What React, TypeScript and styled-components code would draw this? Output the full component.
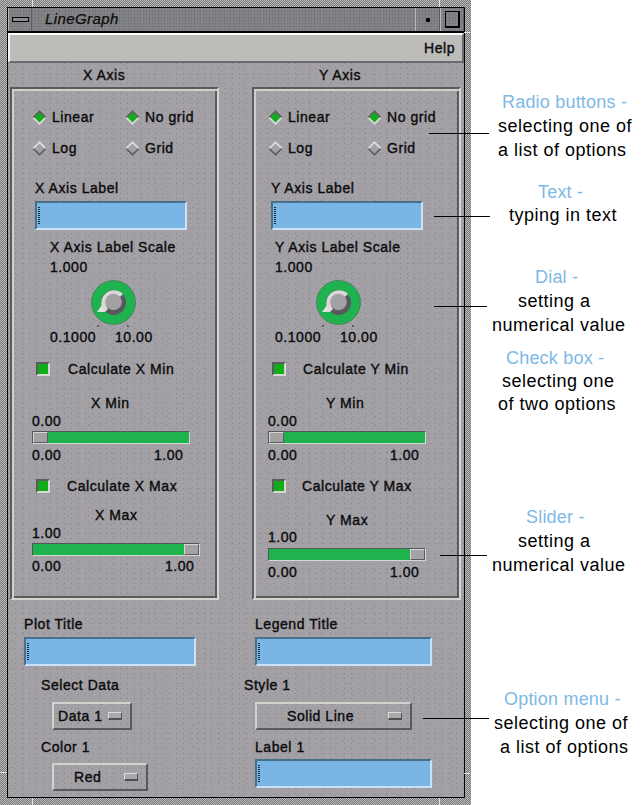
import React from "react";
import styled, { createGlobalStyle, css } from "styled-components";

const Global = createGlobalStyle`
  html, body { margin: 0; padding: 0; background: #fff; }
  body { font-family: "Liberation Sans", Arial, sans-serif; }
`;

const speckle = css`
  background-color: #a3a1a6;
  background-image:
    radial-gradient(circle at 0.5px 0.5px, #86858a 0.5px, transparent 0.6px),
    radial-gradient(circle at 0.5px 0.5px, #8b8a8f 0.5px, transparent 0.6px),
    radial-gradient(circle at 0.5px 0.5px, #8e8d92 0.5px, transparent 0.6px);
  background-size: 7px 5px, 11px 9px, 13px 7px;
  background-position: 0 0, 4px 2px, 2px 4px;
`;

const Page = styled.div`
  position: relative;
  width: 642px;
  height: 805px;
  overflow: hidden;
  display: flex;
  background: #fff;
`;

const Frame = styled.div`
  position: relative;
  box-sizing: border-box;
  width: 471px;
  height: 805px;
  padding: 7px 6px 7px 7px;
  background: repeating-conic-gradient(#747474 0 25%, #bdbdbd 0 50%) 0 0 / 2px 2px;
`;

const FrameTick = styled.i<{ $x: number; $y: number; $w: number; $h: number }>`
  position: absolute;
  left: ${(p) => p.$x}px;
  top: ${(p) => p.$y}px;
  width: ${(p) => p.$w}px;
  height: ${(p) => p.$h}px;
  background: #e4e4e0;
`;

const Window = styled.div`
  box-sizing: border-box;
  height: 791px;
  border: 1px solid #000;
  display: flex;
  flex-direction: column;
`;

const TitleBar = styled.div`
  height: 23px;
  display: flex;
  align-items: stretch;
  background-color: #838286;
  background-image:
    radial-gradient(circle at 0.5px 0.5px, #6d6c70 0.5px, transparent 0.6px),
    radial-gradient(circle at 0.5px 0.5px, #717074 0.5px, transparent 0.6px);
  background-size: 3px 3px, 5px 4px;
  background-position: 0 0, 1px 2px;
  border-bottom: 2px solid #000;
  flex: none;
`;

const TitleButton = styled.div<{ $w: number }>`
  width: ${(p) => p.$w}px;
  flex: none;
  display: flex;
  align-items: center;
  justify-content: center;
  box-sizing: border-box;
  border-left: 1px solid #b8b8b4;
  border-right: 1px solid #5e5d60;
`;

const MenuGlyph = styled.span`
  width: 15px;
  height: 3px;
  background: #8f8e90;
  border: 1px solid #000;
`;
const DotGlyph = styled.span`
  width: 4px;
  height: 4px;
  background: #000;
  border-radius: 1px;
`;
const MaxGlyph = styled.span`
  box-sizing: border-box;
  width: 15px;
  height: 17px;
  border: 1px solid #000;
  border-right-width: 2px;
  border-bottom-width: 2px;
`;

const Title = styled.div`
  flex: 1;
  padding-left: 13px;
  font-style: italic;
  font-size: 15px;
  line-height: 22px;
  letter-spacing: 0.4px;
  color: #0c0c0c;
  -webkit-text-stroke: 0.25px #0c0c0c;
`;

const MenuBar = styled.div`
  box-sizing: border-box;
  height: 30px;
  flex: none;
  background: #bcbdb9;
  border-top: 2px solid #fff;
  border-left: 2px solid #f2f2f0;
  border-bottom: 2px solid #6c6b6e;
  border-right: 2px solid #6c6b6e;
  display: flex;
  align-items: center;
  justify-content: flex-end;
  padding-right: 7px;
`;

const Body = styled.div`
  ${speckle}
  flex: 1;
  min-height: 0;
`;

const Text = styled.span`
  font-size: 14px;
  letter-spacing: 0.55px;
  color: #0c0c0c;
  -webkit-text-stroke: 0.4px #0c0c0c;
  white-space: nowrap;
`;

const AxisGrid = styled.div`
  display: grid;
  grid-template-columns: 209px 209px;
  column-gap: 33px;
  padding-left: 2px;
`;

const Heading = styled.div<{ $x: number }>`
  height: 24px;
  padding-left: ${(p) => p.$x}px;
  display: flex;
  align-items: center;
`;

const Panel = styled.div`
  box-sizing: border-box;
  height: 513px;
  border: 2px solid;
  border-color: #5b5a5e #d5d6d0 #d5d6d0 #5b5a5e;
  box-shadow: inset 2px 2px 0 #cfd0ca, inset -2px -2px 0 #5b5a5e;
  display: flex;
  flex-direction: column;
`;

const Row = styled.div<{ $x?: number; $mt?: number; $h?: number }>`
  flex: none;
  height: ${(p) => p.$h ?? 18}px;
  margin-top: ${(p) => p.$mt ?? 0}px;
  margin-left: ${(p) => p.$x ?? 0}px;
  display: flex;
  align-items: center;
`;

const RadioGrid = styled.div<{ $x: number; $col: number }>`
  margin: 16px 0 0 ${(p) => p.$x}px;
  display: grid;
  grid-template-columns: ${(p) => p.$col}px 80px;
  grid-auto-rows: 24px;
  row-gap: 7px;
`;

const RadioItem = styled.label`
  display: flex;
  align-items: center;
  gap: 5px;
`;

const RadioSvg = styled.svg`
  width: 15px;
  height: 15px;
  flex: none;
`;

const Radio = ({ on, label }: { on: boolean; label: string }) => (
  <RadioItem>
    <RadioSvg viewBox="0 0 15 15">
      <polygon points="7.5,0 15,7.5 7.5,15 0,7.5" fill="#dcdcd8" />
      {on ? (
        <polygon points="7.5,0 15,7.5 12,7.5 7.5,3 3,7.5 0,7.5" fill="#5c5b5f" />
      ) : (
        <polygon points="15,7.5 7.5,15 0,7.5 3,7.5 7.5,12 12,7.5" fill="#5c5b5f" />
      )}
      <polygon points="7.5,2.5 12.5,7.5 7.5,12.5 2.5,7.5" fill={on ? "#12ad1c" : "#a3a1a6"} />
    </RadioSvg>
    <Text>{label}</Text>
  </RadioItem>
);

const FieldBox = styled.div<{ $w: number }>`
  position: relative;
  box-sizing: border-box;
  width: ${(p) => p.$w}px;
  height: 29px;
  background: #79b6e5;
  border: 2px solid;
  border-color: #48708a #c9e2f6 #c9e2f6 #48708a;
`;

const Caret = styled.i`
  position: absolute;
  left: 1px;
  top: 4px;
  width: 2px;
  height: 17px;
  background: repeating-linear-gradient(#1a2a36 0 1px, transparent 1px 2px);
`;

const Field = ({ w }: { w: number }) => (
  <FieldBox $w={w}>
    <Caret />
  </FieldBox>
);

const DialSvg = styled.svg`
  width: 46px;
  height: 48px;
  display: block;
`;

const Dial = () => (
  <DialSvg viewBox="0 0 46 48">
    <path d="M7.5 45 L6.5 47 M36.5 45 L37.5 47" stroke="#222" strokeWidth="1" fill="none" />
    <circle cx="22.5" cy="22.5" r="22" fill="#1fb34f" stroke="#4a7a58" strokeWidth="0.8" />
    <circle cx="22.5" cy="22.5" r="12.5" fill="#59585c" />
    <path d="M14 32 A12.5 12.5 0 0 1 32 14 L29 17 A8.5 8.5 0 0 0 17 29 Z" fill="#d9d9d5" />
    <circle cx="22.5" cy="22" r="8.3" fill="#a3a1a6" />
    <polygon points="6,32 11,25 14,32" fill="#e0e0dc" />
  </DialSvg>
);

const RangeText = styled.span<{ $w: number }>`
  width: ${(p) => p.$w}px;
  flex: none;
`;

const CheckBox = styled.span`
  box-sizing: border-box;
  width: 14px;
  height: 14px;
  flex: none;
  background: #10ad18;
  border: 2px solid;
  border-color: #5c5b5f #d8d8d4 #d8d8d4 #5c5b5f;
  margin-right: var(--gap);
`;

const CheckRow = styled(Row)<{ $gap: number }>`
  --gap: ${(p) => p.$gap}px;
`;

const Trough = styled.div<{ $w: number; $end: boolean }>`
  box-sizing: border-box;
  width: ${(p) => p.$w}px;
  height: 13px;
  display: flex;
  flex-direction: ${(p) => (p.$end ? "row-reverse" : "row")};
  background: #1fb34f;
  border: 1px solid;
  border-color: #56555a #d6d6d2 #d6d6d2 #56555a;
`;

const Thumb = styled.div`
  box-sizing: border-box;
  width: 15px;
  height: 100%;
  background: #a3a2a5;
  border: 1px solid;
  border-color: #d6d6d2 #5c5b5f #5c5b5f #d6d6d2;
`;

const OptionButton = styled.div<{ $w: number; $tx: number; $ir: number }>`
  box-sizing: border-box;
  width: ${(p) => p.$w}px;
  height: 28px;
  border: 2px solid;
  border-color: #d2d2ce #5a595d #5a595d #d2d2ce;
  padding-left: ${(p) => p.$tx}px;
  padding-right: ${(p) => p.$ir}px;
  display: flex;
  align-items: center;
  justify-content: space-between;
`;

const OptionMark = styled.span`
  box-sizing: border-box;
  width: 14px;
  height: 8px;
  background: #a9a8aa;
  border: 1px solid;
  border-color: #dcdcd8 #4f4e52 #4f4e52 #dcdcd8;
  border-bottom-width: 2px;
`;

const BottomGrid = styled.div`
  display: grid;
  grid-template-columns: 236px 1fr;
`;

const BottomColumn = styled.div`
  display: flex;
  flex-direction: column;
`;

const Notes = styled.div`
  flex: 1;
  display: flex;
  flex-direction: column;
`;

const Note = styled.div<{ $mt: number; $lh: number }>`
  margin-top: ${(p) => p.$mt}px;
  line-height: ${(p) => p.$lh}px;
  font-size: 18px;
  letter-spacing: 0.5px;
  white-space: nowrap;
`;

const NoteLine = styled.div<{ $x: number; $head?: boolean }>`
  padding-left: ${(p) => p.$x}px;
  color: ${(p) => (p.$head ? "#7db9e5" : "#000")};
  letter-spacing: ${(p) => (p.$head ? "0.2px" : "0.5px")};
`;

const Leader = styled.i<{ $x: number; $y: number; $w: number }>`
  position: absolute;
  left: ${(p) => p.$x}px;
  top: ${(p) => p.$y}px;
  width: ${(p) => p.$w}px;
  height: 1px;
  background: #000;
`;

type Axis = {
  name: string; head: number; radioX: number; radioCol: number; labelX: number; scaleX: number;
  dialX: number; rangeW: number; checkX: number; minGap: number; maxGap: number;
  sliderX: number; minTitle: number; maxTitle: number; maxW: number; minOff: number; maxOff: number;
  titleMt: number; valueMt: number; sliderMt: number; rangeMt: number;
};

const axes: Axis[] = [
  { name: "X", head: 73, radioX: 20, radioCol: 93, labelX: 23, scaleX: 38, dialX: 79, rangeW: 65, checkX: 24,
    minGap: 18, maxGap: 17, sliderX: 20, minTitle: 79, maxTitle: 83, maxW: 168, minOff: 122, maxOff: 133,
    titleMt: 11, valueMt: 2, sliderMt: 3, rangeMt: 3 },
  { name: "Y", head: 67, radioX: 14, radioCol: 99, labelX: 17, scaleX: 21, dialX: 62, rangeW: 65, checkX: 18,
    minGap: 17, maxGap: 16, sliderX: 14, minTitle: 72, maxTitle: 72, maxW: 158, minOff: 122, maxOff: 122,
    titleMt: 16, valueMt: 1, sliderMt: 4, rangeMt: 4 },
];

const AxisColumn = ({ a }: { a: Axis }) => (
  <div>
    <Heading $x={a.head}><Text>{a.name} Axis</Text></Heading>
    <Panel>
      <RadioGrid $x={a.radioX} $col={a.radioCol}>
        <Radio on label="Linear" />
        <Radio on label="No grid" />
        <Radio on={false} label="Log" />
        <Radio on={false} label="Grid" />
      </RadioGrid>
      <Row $x={a.labelX} $mt={19}><Text>{a.name} Axis Label</Text></Row>
      <Row $x={a.labelX} $mt={4} $h={29}><Field w={152} /></Row>
      <Row $x={a.scaleX} $mt={8}><Text>{a.name} Axis Label Scale</Text></Row>
      <Row $x={a.scaleX} $mt={2}><Text>1.000</Text></Row>
      <Row $x={a.dialX} $mt={4} $h={48}><Dial /></Row>
      <Row $x={a.scaleX} $h={18}>
        <RangeText $w={a.rangeW}><Text>0.1000</Text></RangeText>
        <Text>10.00</Text>
      </Row>
      <CheckRow $x={a.checkX} $mt={14} $gap={a.minGap}><CheckBox /><Text>Calculate {a.name} Min</Text></CheckRow>
      <Row $x={a.minTitle} $mt={16}><Text>{a.name} Min</Text></Row>
      <Row $x={a.sliderX} $mt={2} $h={14}><Text>0.00</Text></Row>
      <Row $x={a.sliderX} $mt={3} $h={13}><Trough $w={158} $end={false}><Thumb /></Trough></Row>
      <Row $x={a.sliderX} $mt={4} $h={14}>
        <RangeText $w={a.minOff}><Text>0.00</Text></RangeText>
        <Text>1.00</Text>
      </Row>
      <CheckRow $x={a.checkX} $mt={15} $gap={a.maxGap}><CheckBox /><Text>Calculate {a.name} Max</Text></CheckRow>
      <Row $x={a.maxTitle} $mt={a.titleMt}><Text>{a.name} Max</Text></Row>
      <Row $x={a.sliderX} $mt={a.valueMt} $h={14}><Text>1.00</Text></Row>
      <Row $x={a.sliderX} $mt={a.sliderMt} $h={13}><Trough $w={a.maxW} $end><Thumb /></Trough></Row>
      <Row $x={a.sliderX} $mt={a.rangeMt} $h={14}>
        <RangeText $w={a.maxOff}><Text>0.00</Text></RangeText>
        <Text>1.00</Text>
      </Row>
    </Panel>
  </div>
);

const notes: { mt: number; lh: number; lines: [number, string, boolean?][] }[] = [
  { mt: 90, lh: 24, lines: [[31, "Radio buttons -", true], [27, "selecting one of"], [27, "a list of options"]] },
  { mt: 19, lh: 23, lines: [[67, "Text -", true], [38, "typing in text"]] },
  { mt: 38, lh: 24, lines: [[64, "Dial -", true], [47, "setting a"], [21, "numerical value"]] },
  { mt: 10, lh: 23, lines: [[35, "Check box -", true], [31, "selecting one"], [27, "of two options"]] },
  { mt: 89, lh: 24, lines: [[55, "Slider -", true], [47, "setting a"], [21, "numerical value"]] },
  { mt: 110, lh: 24, lines: [[33, "Option menu -", true], [23, "selecting one of"], [29, "a list of options"]] },
];

export default function App() {
  return (
    <Page>
      <Global />
      <Frame>
        <FrameTick $x={32} $y={0} $w={1} $h={7} />
        <FrameTick $x={439} $y={0} $w={1} $h={7} />
        <FrameTick $x={32} $y={798} $w={1} $h={7} />
        <FrameTick $x={439} $y={798} $w={1} $h={7} />
        <FrameTick $x={0} $y={772} $w={7} $h={1} />
        <FrameTick $x={464} $y={773} $w={6} $h={1} />
        <FrameTick $x={464} $y={32} $w={6} $h={1} />
        <Window>
          <TitleBar>
            <TitleButton $w={24}><MenuGlyph /></TitleButton>
            <Title>LineGraph</Title>
            <TitleButton $w={25}><DotGlyph /></TitleButton>
            <TitleButton $w={24}><MaxGlyph /></TitleButton>
          </TitleBar>
          <MenuBar><Text>Help</Text></MenuBar>
          <Body>
            <AxisGrid>
              {axes.map((a) => <AxisColumn key={a.name} a={a} />)}
            </AxisGrid>
            <BottomGrid>
              <BottomColumn>
                <Row $x={16} $mt={15}><Text>Plot Title</Text></Row>
                <Row $x={16} $mt={4} $h={29}><Field w={172} /></Row>
                <Row $x={33} $mt={10}><Text>Select Data</Text></Row>
                <Row $x={44} $mt={8} $h={28}>
                  <OptionButton $w={80} $tx={4} $ir={8}><Text>Data 1</Text><OptionMark /></OptionButton>
                </Row>
                <Row $x={33} $mt={8}><Text>Color 1</Text></Row>
                <Row $x={44} $mt={7} $h={28}>
                  <OptionButton $w={96} $tx={20} $ir={8}><Text>Red</Text><OptionMark /></OptionButton>
                </Row>
              </BottomColumn>
              <BottomColumn>
                <Row $x={11} $mt={15}><Text>Legend Title</Text></Row>
                <Row $x={11} $mt={4} $h={29}><Field w={177} /></Row>
                <Row $mt={10}><Text>Style 1</Text></Row>
                <Row $x={11} $mt={8} $h={28}>
                  <OptionButton $w={157} $tx={30} $ir={8}><Text>Solid Line</Text><OptionMark /></OptionButton>
                </Row>
                <Row $x={11} $mt={8}><Text>Label 1</Text></Row>
                <Row $x={11} $mt={3} $h={29}><Field w={177} /></Row>
              </BottomColumn>
            </BottomGrid>
          </Body>
        </Window>
      </Frame>
      <Notes>
        {notes.map((n, i) => (
          <Note key={i} $mt={n.mt} $lh={n.lh}>
            {n.lines.map(([x, t, head]) => <NoteLine key={t} $x={x} $head={head}>{t}</NoteLine>)}
          </Note>
        ))}
      </Notes>
      <Leader $x={429} $y={133} $w={60} />
      <Leader $x={434} $y={216} $w={56} />
      <Leader $x={434} $y={306} $w={53} />
      <Leader $x={440} $y={555} $w={47} />
      <Leader $x={423} $y={718} $w={66} />
    </Page>
  );
}
